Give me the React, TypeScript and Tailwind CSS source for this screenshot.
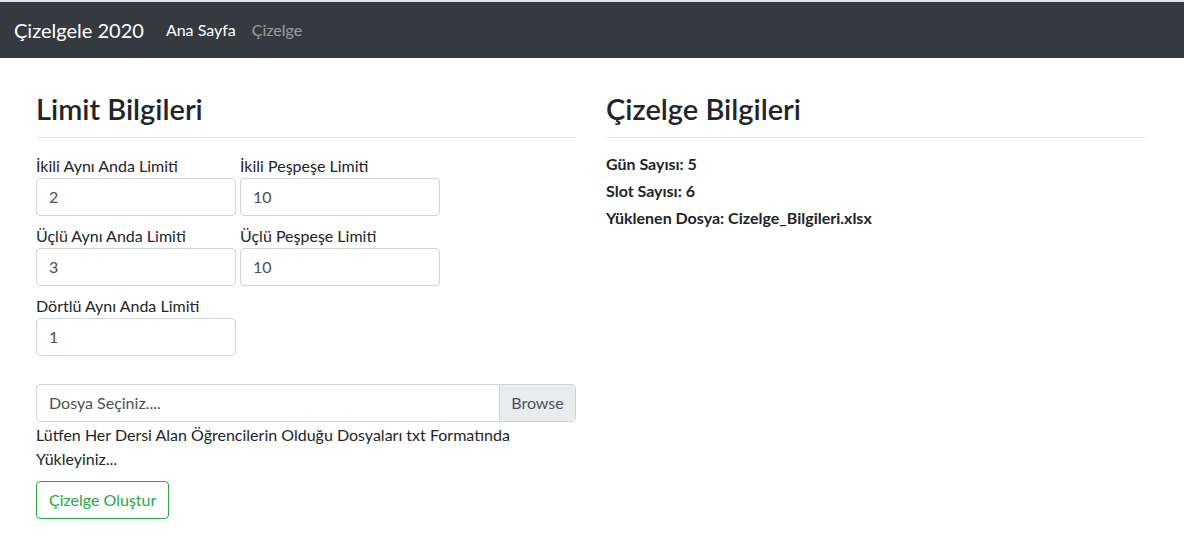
import React from "react";

const font = { fontFamily: 'Lato, "Open Sans", sans-serif' };

function Field({ label, value }: { label: string; value: string }) {
  return (
    <div className="flex flex-col w-[200px]">
      <label className="text-[16px] leading-[24px] text-[#212529]">{label}</label>
      <div className="h-[38px] border border-[#ced4da] rounded-[4px] px-[12px] flex items-center text-[16px] text-[#495057] bg-white">
        {value}
      </div>
    </div>
  );
}

export default function App() {
  return (
    <div className="w-[1184px] h-[534px] bg-white overflow-hidden" style={font}>
      <div className="h-[2px] bg-[#e4e4e4]" />
      <nav className="h-[56px] bg-[#343a40] flex items-center px-[14px]">
        <span className="text-white text-[20px] leading-[30px] mr-[14px]">Çizelgele 2020</span>
        <span className="text-white text-[16px] px-[8px]">Ana Sayfa</span>
        <span className="text-[rgba(255,255,255,0.5)] text-[16px] px-[8px]">Çizelge</span>
      </nav>
      <div className="flex gap-[30px] pl-[36px] pt-[32px]">
        <div className="w-[540px] flex flex-col">
          <h2 className="text-[29px] leading-[38px] font-semibold text-[#212529]">Limit Bilgileri</h2>
          <div className="h-px bg-[rgba(0,0,0,0.1)] mt-[9px] mb-[16px]" />
          <div className="flex flex-col gap-[8px]">
            <div className="flex gap-[4px]">
              <Field label="İkili Aynı Anda Limiti" value="2" />
              <Field label="İkili Peşpeşe Limiti" value="10" />
            </div>
            <div className="flex gap-[4px]">
              <Field label="Üçlü Aynı Anda Limiti" value="3" />
              <Field label="Üçlü Peşpeşe Limiti" value="10" />
            </div>
            <div className="flex gap-[4px]">
              <Field label="Dörtlü Aynı Anda Limiti" value="1" />
            </div>
          </div>
          <div className="mt-[28px] h-[38px] border border-[#ced4da] rounded-[4px] flex text-[16px] text-[#495057]">
            <div className="flex-1 flex items-center px-[12px]">Dosya Seçiniz....</div>
            <div className="w-[76px] bg-[#e9ecef] border-l border-[#ced4da] flex items-center justify-center rounded-r-[3px]">Browse</div>
          </div>
          <p className="text-[16px] leading-[24px] text-[#212529] mt-px">
            Lütfen Her Dersi Alan Öğrencilerin Olduğu Dosyaları txt Formatında
            <br />
            Yükleyiniz...
          </p>
          <div className="mt-[10px]">
            <button className="h-[38px] px-[12px] border border-[#28a745] rounded-[4px] text-[#28a745] text-[16px]">
              Çizelge Oluştur
            </button>
          </div>
        </div>
        <div className="w-[540px] flex flex-col">
          <h2 className="text-[29px] leading-[38px] font-semibold text-[#212529]">Çizelge Bilgileri</h2>
          <div className="h-px bg-[rgba(0,0,0,0.1)] mt-[9px] mb-[16px]" />
          <div className="flex flex-col gap-[8px] text-[16px] leading-[19px] font-bold text-[#212529]">
            <div>Gün Sayısı: 5</div>
            <div>Slot Sayısı: 6</div>
            <div>Yüklenen Dosya: Cizelge_Bilgileri.xlsx</div>
          </div>
        </div>
      </div>
    </div>
  );
}
